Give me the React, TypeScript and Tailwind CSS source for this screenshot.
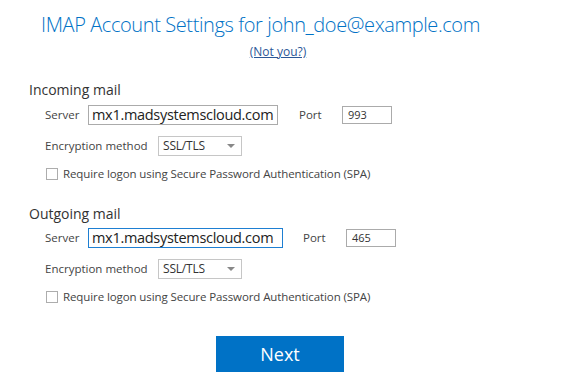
const FONT = { fontFamily: '"Segoe UI", "Open Sans", "Noto Sans", sans-serif' };

interface MailSectionProps {
  title: string;
  server: string;
  serverWidth: string;
  focused?: boolean;
  port: string;
  portGap: string;
  headingGap: string;
  serverGap: string;
}

const Checkbox = ({ label }: { label: string }) => (
  <div className="flex items-center h-[16px] pl-[17px]">
    <span className="shrink-0 w-[12px] h-[12px] border border-[#adadad] bg-white" />
    <span className="ml-[5px] text-[11.5px] tracking-[-0.1px] text-[#444] whitespace-nowrap">{label}</span>
  </div>
);

const Select = ({ value }: { value: string }) => (
  <div className="shrink-0 flex items-center justify-between w-[84px] h-[20px] border border-[#c6c6c6] bg-white pl-[4px] pr-[6px]">
    <span className="text-[12px] tracking-[-0.2px] text-[#333]">{value}</span>
    <svg width="8" height="5" viewBox="0 0 8 5">
      <path d="M0 0h8L4 4z" fill="#888" />
    </svg>
  </div>
);

const MailSection = ({
  title,
  server,
  serverWidth,
  focused,
  port,
  portGap,
  headingGap,
  serverGap,
}: MailSectionProps) => {
  return (
    <div className={`flex flex-col pl-[29px] ${headingGap}`}>
      <div className="h-[20px] leading-[20px] text-[14px] text-[#333]">{title}</div>
      <div className={`flex items-center h-[20px] pl-[16px] ${serverGap}`}>
        <span className="shrink-0 w-[43px] text-[11.5px] text-[#444]">Server</span>
        <div
          className={`shrink-0 ${serverWidth} h-[20px] flex items-center pl-[3px] overflow-hidden border ${
            focused ? 'border-[#1e7fd2]' : 'border-[#ababab]'
          }`}
        >
          <span className="text-[14.5px] tracking-[-0.3px] leading-none text-[#222] whitespace-nowrap">
            {server}
          </span>
        </div>
        <span className={`shrink-0 ${portGap} w-[43px] text-[11.5px] text-[#444]`}>Port</span>
        <div className="shrink-0 w-[50px] h-[18px] flex items-center pl-[5px] border border-[#ababab]">
          <span className="text-[11px] text-[#333]">{port}</span>
        </div>
      </div>
      <div className="flex items-center h-[20px] mt-[11px] pl-[16px]">
        <span className="shrink-0 w-[113px] text-[11.5px] text-[#444]">Encryption method</span>
        <Select value="SSL/TLS" />
      </div>
      <div className="mt-[10px]">
        <Checkbox label="Require logon using Secure Password Authentication (SPA)" />
      </div>
    </div>
  );
};

export default function App() {
  return (
    <div className="w-[565px] h-[391px] bg-white flex flex-col" style={FONT}>
      <div className="pt-[9px] h-[40px] text-center pr-[44px]">
        <h1 className="h-[32px] leading-[32px] text-[20px] tracking-[-0.4px] font-light text-[#0072c6] whitespace-nowrap">
          IMAP Account Settings for john_doe@example.com
        </h1>
      </div>
      <div className="mt-[2px] h-[16px] leading-[16px] text-center pr-[9px]">
        <a href="#" className="text-[12px] text-[#2b5797] underline">
          (Not you?)
        </a>
      </div>
      <MailSection
        title="Incoming mail"
        server="mx1.madsystemscloud.com"
        serverWidth="w-[190px]"
        port="993"
        portGap="ml-[21px]"
        headingGap="mt-[22px]"
        serverGap="mt-[5px]"
      />
      <MailSection
        title="Outgoing mail"
        server="mx1.madsystemscloud.com"
        serverWidth="w-[195px]"
        focused
        port="465"
        portGap="ml-[20px]"
        headingGap="mt-[22px]"
        serverGap="mt-[4px]"
      />
      <div className="flex justify-center mt-[31px]">
        <button className="w-[128px] h-[36px] bg-[#0072c6] text-white text-[18px] ml-[-5px]">
          Next
        </button>
      </div>
    </div>
  );
}
